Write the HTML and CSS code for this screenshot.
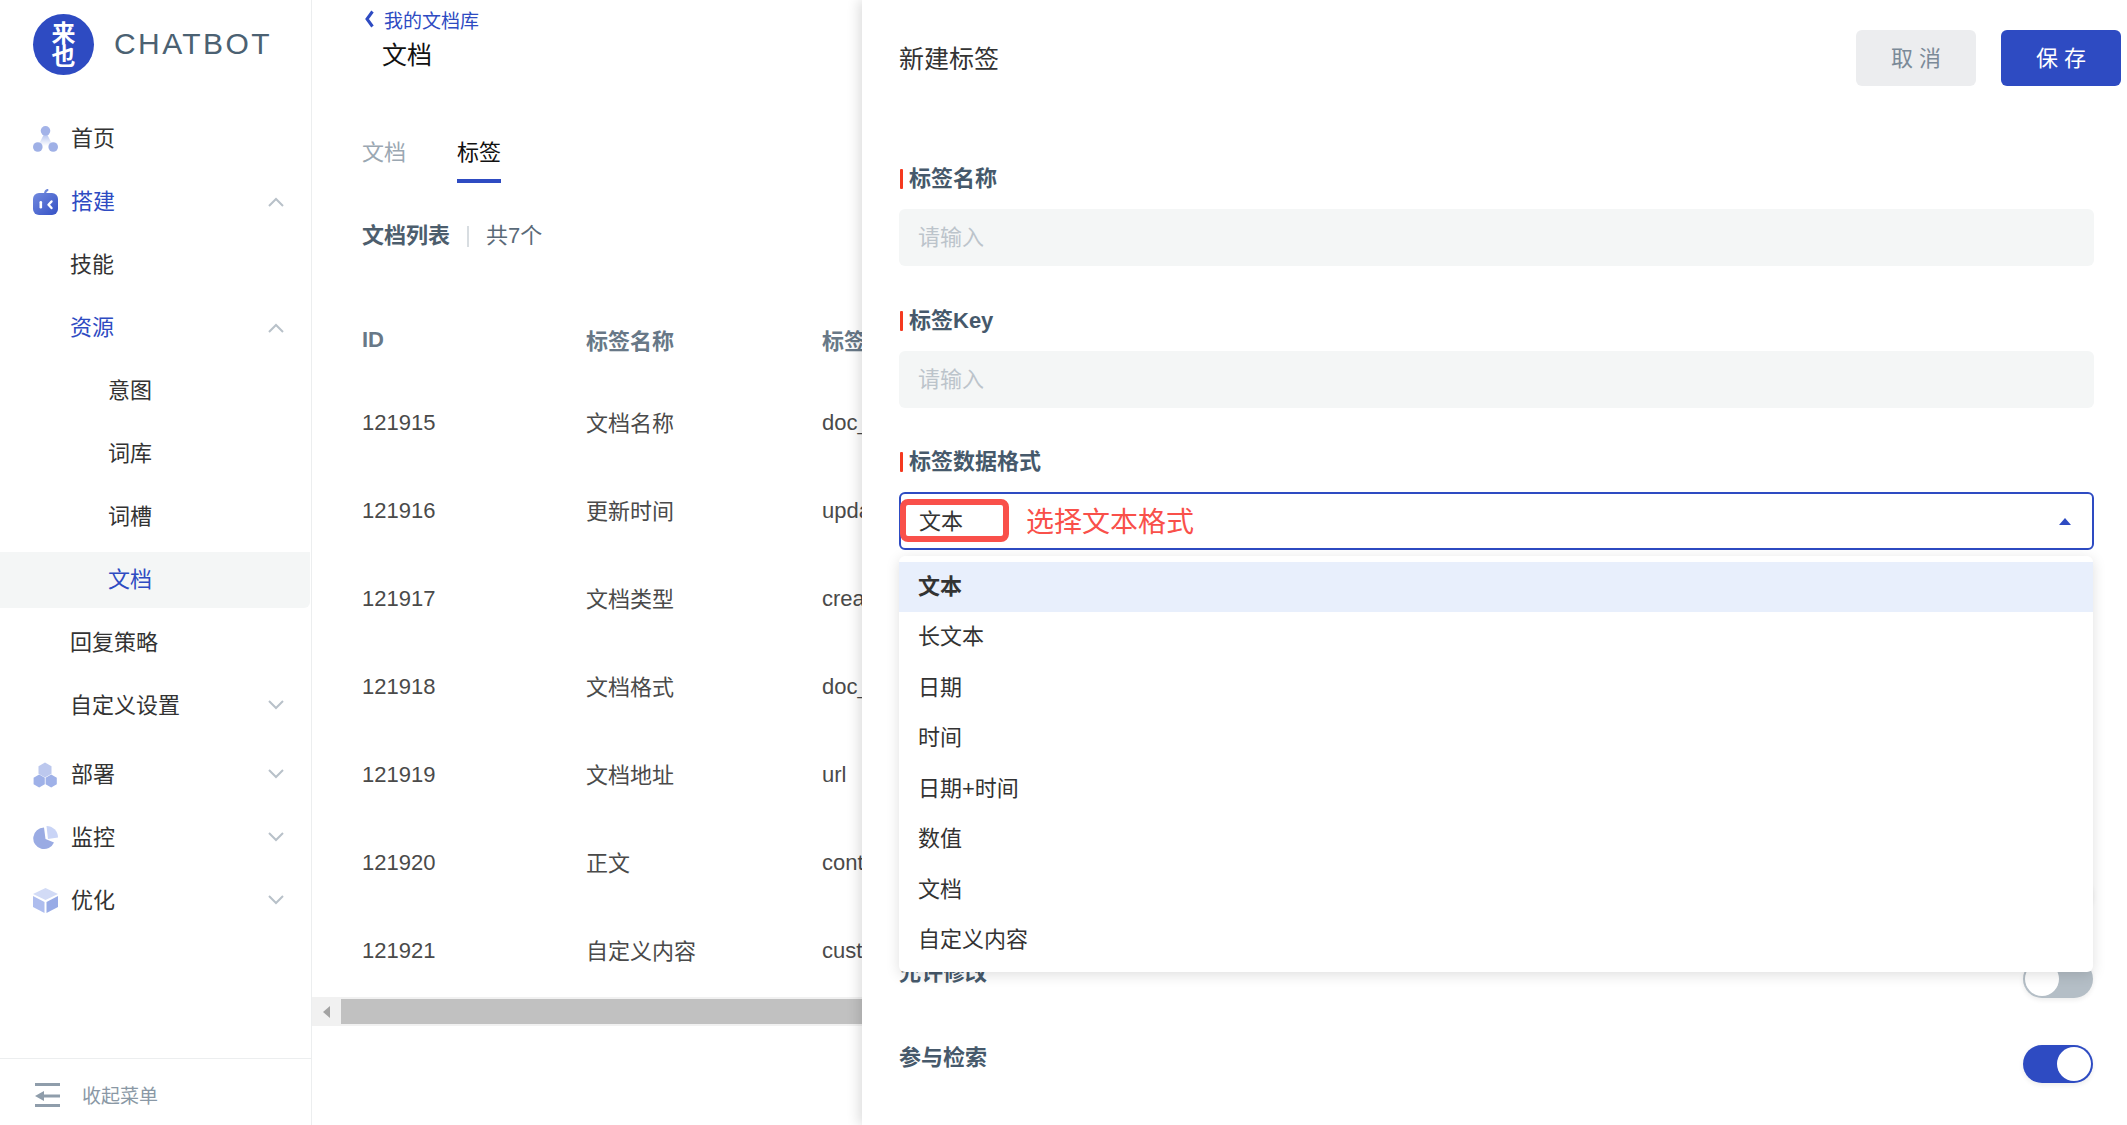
FILE: index.html
```html
<!DOCTYPE html>
<html lang="zh-CN">
<head>
  <meta charset="UTF-8">
  <title>CHATBOT</title>
  <link rel="stylesheet" href="styles.css">
</head>
<body>
  <aside class="sidebar">
    <div class="brand">
      <div class="brand-logo"><span>来</span><span>也</span></div>
      <div class="brand-name">CHATBOT</div>
    </div>

    <nav class="menu">
      <a class="menu-item">
        <svg class="menu-icon" viewBox="0 0 25 26">
          <defs>
            <linearGradient id="homeFade" x1="0" y1="0" x2="0" y2="1">
              <stop offset="0" stop-color="#9fb2ea"/>
              <stop offset="1" stop-color="#ffffff"/>
            </linearGradient>
          </defs>
          <polygon points="12.5,5 5,20 20,20" fill="url(#homeFade)"/>
          <circle cx="12.5" cy="4.8" r="4.8" fill="#a3b3e8"/>
          <circle cx="4.8" cy="21" r="4.8" fill="#9fb0e6"/>
          <circle cx="20.2" cy="21" r="4.8" fill="#9fb0e6"/>
        </svg>
        首页
      </a>
      <a class="menu-item is-open">
        <svg class="menu-icon" viewBox="0 0 25 26">
          <defs>
            <linearGradient id="botFill" x1="0" y1="0" x2="1" y2="1">
              <stop offset="0" stop-color="#7189de"/>
              <stop offset="1" stop-color="#3551c5"/>
            </linearGradient>
          </defs>
          <path d="M12 5 Q12 2 14.5 1" fill="none" stroke="#6d85da" stroke-width="2" stroke-linecap="round"/>
          <rect x="0" y="4" width="25" height="22" rx="6" fill="url(#botFill)"/>
          <rect x="6.5" y="12" width="2.6" height="7.5" rx="1.3" fill="#fff"/>
          <path d="M18.5 12.5 L15.5 15.8 L18.5 19" fill="none" stroke="#fff" stroke-width="2.4" stroke-linecap="round" stroke-linejoin="round"/>
        </svg>
        搭建
        <svg class="chevron" viewBox="0 0 16 10"><polyline points="1,9 8,2 15,9"/></svg>
      </a>
      <a class="menu-item menu-sub">技能</a>
      <a class="menu-item menu-sub is-open">
        资源
        <svg class="chevron" viewBox="0 0 16 10"><polyline points="1,9 8,2 15,9"/></svg>
      </a>
      <a class="menu-item menu-leaf">意图</a>
      <a class="menu-item menu-leaf">词库</a>
      <a class="menu-item menu-leaf">词槽</a>
      <a class="menu-item menu-leaf is-active">文档</a>
      <a class="menu-item menu-sub">回复策略</a>
      <a class="menu-item menu-sub menu-group-end">
        自定义设置
        <svg class="chevron is-down" viewBox="0 0 16 10"><polyline points="1,1 8,8 15,1"/></svg>
      </a>
      <a class="menu-item">
        <svg class="menu-icon" viewBox="0 0 25 26">
          <polygon points="12,0.5 18.5,4.25 18.5,11.75 12,15.5 5.5,11.75 5.5,4.25" fill="#bcc8ee"/>
          <polygon points="6.2,12.5 11.8,15.75 11.8,22.25 6.2,25.5 0.6,22.25 0.6,15.75" fill="#9fb1e8"/>
          <polygon points="18.2,12.5 23.8,15.75 23.8,22.25 18.2,25.5 12.6,22.25 12.6,15.75" fill="#9fb1e8"/>
        </svg>
        部署
        <svg class="chevron is-down" viewBox="0 0 16 10"><polyline points="1,1 8,8 15,1"/></svg>
      </a>
      <a class="menu-item">
        <svg class="menu-icon" viewBox="0 0 25 26">
          <path d="M11 2.5 A10.8 10.8 0 1 0 21 17.5 L12.5 14 Z" fill="#9aabe3"/>
          <path d="M13.5 1 A11.5 11.5 0 0 1 25 12.5 L15 14 Z" fill="#c9d4f6"/>
        </svg>
        监控
        <svg class="chevron is-down" viewBox="0 0 16 10"><polyline points="1,1 8,8 15,1"/></svg>
      </a>
      <a class="menu-item">
        <svg class="menu-icon" viewBox="0 0 25 26">
          <polygon points="12.5,0 25,6 12.5,12 0,6" fill="#d2dbf6"/>
          <polygon points="0,8 11.5,14 11.5,25 0,19" fill="#aebdee"/>
          <polygon points="25,8 13.5,14 13.5,25 25,19" fill="#98abe6"/>
        </svg>
        优化
        <svg class="chevron is-down" viewBox="0 0 16 10"><polyline points="1,1 8,8 15,1"/></svg>
      </a>
    </nav>

    <div class="collapse">
      <svg class="collapse-icon" viewBox="0 0 25 24">
        <rect x="0" y="0" width="25" height="3" fill="#8f9dab"/>
        <rect x="4" y="11.5" width="21" height="3" fill="#8f9dab"/>
        <polygon points="0,13 9,8 9,18" fill="#8f9dab"/>
        <rect x="0" y="21" width="25" height="3" fill="#8f9dab"/>
      </svg>
      收起菜单
    </div>
  </aside>

  <main class="main">
    <a class="back-link">
      <svg class="back-icon" viewBox="0 0 9 18"><polyline points="7.5,1.5 2,9 7.5,16.5"/></svg>
      我的文档库
    </a>
    <h1 class="page-title">文档</h1>

    <div class="tabs">
      <span class="tab">文档</span>
      <span class="tab is-active">标签</span>
    </div>

    <div class="summary">
      <b>文档列表</b>
      <i class="summary-line"></i>
      <span>共7个</span>
    </div>

    <table class="doc-table">
      <thead>
        <tr><th class="col-id">ID</th><th class="col-name">标签名称</th><th class="col-key">标签Key</th></tr>
      </thead>
      <tbody>
        <tr><td>121915</td><td class="col-name">文档名称</td><td>doc_name</td></tr>
        <tr><td>121916</td><td class="col-name">更新时间</td><td>update_time</td></tr>
        <tr><td>121917</td><td class="col-name">文档类型</td><td>create_time</td></tr>
        <tr><td>121918</td><td class="col-name">文档格式</td><td>doc_format</td></tr>
        <tr><td>121919</td><td class="col-name">文档地址</td><td>url</td></tr>
        <tr><td>121920</td><td class="col-name">正文</td><td>content</td></tr>
        <tr><td>121921</td><td class="col-name">自定义内容</td><td>custom</td></tr>
      </tbody>
    </table>

    <div class="h-scroll">
      <span class="h-scroll-arrow"><i></i></span>
      <span class="h-scroll-thumb"></span>
    </div>
  </main>

  <section class="drawer">
    <header class="drawer-head">
      <h2>新建标签</h2>
      <div class="drawer-actions">
        <button class="btn btn-cancel">取消</button>
        <button class="btn btn-save">保存</button>
      </div>
    </header>

    <form class="drawer-form">
      <label class="field-label">标签名称</label>
      <div class="input">请输入</div>

      <label class="field-label">标签Key</label>
      <div class="input">请输入</div>

      <label class="field-label">标签数据格式</label>
      <div class="select-wrap">
        <div class="select">
          <span class="select-value">文本</span>
          <span class="select-note">选择文本格式</span>
          <i class="select-caret"></i>
          <span class="select-mark"></span>
        </div>
        <ul class="dropdown">
          <li class="is-selected">文本</li>
          <li>长文本</li>
          <li>日期</li>
          <li>时间</li>
          <li>日期+时间</li>
          <li>数值</li>
          <li>文档</li>
          <li>自定义内容</li>
        </ul>
      </div>

      <div class="switches">
        <div class="switch-row">
          <span class="switch-label"></span>
          <span class="toggle is-on"><i></i></span>
        </div>
        <div class="switch-row">
          <span class="switch-label">允许修改</span>
          <span class="toggle"><i></i></span>
        </div>
        <div class="switch-row">
          <span class="switch-label">参与检索</span>
          <span class="toggle is-on"><i></i></span>
        </div>
      </div>
    </form>
  </section>
</body>
</html>
```

FILE: styles.css
```css
* {
  box-sizing: border-box;
}

body {
  font-family: "Liberation Sans", "Noto Sans CJK SC", sans-serif;
  font-size: 22px;
  color: #333;
  background: #fff;
  display: flex;
  height: 100vh;
  margin: 0;
  overflow: hidden;
  position: relative;
}

/* sidebar */
.sidebar {
  width: 312px;
  flex-shrink: 0;
  border-right: 1px solid #eceeef;
  display: flex;
  flex-direction: column;
}

.brand {
  height: 111px;
  padding: 14px 0 0 33px;
  display: flex;
  align-items: flex-start;
}

.brand-logo {
  width: 61px;
  height: 61px;
  border-radius: 50%;
  background: #2e4bc2;
  color: #fff;
  font-size: 24px;
  font-weight: 700;
  line-height: 23px;
  display: flex;
  flex-direction: column;
  align-items: center;
  justify-content: center;
}

.brand-name {
  margin-left: 20px;
  font-size: 30px;
  line-height: 60px;
  letter-spacing: 2.4px;
  color: #4b6172;
}

.menu-item {
  height: 56px;
  margin-bottom: 7px;
  padding: 0 27px 0 33px;
  display: flex;
  align-items: center;
  line-height: 56px;
}

.menu-icon {
  width: 25px;
  height: 26px;
  margin-right: 13px;
  flex-shrink: 0;
}

.menu-sub {
  padding-left: 70px;
}

.menu-leaf {
  padding-left: 108px;
}

.menu-group-end {
  margin-bottom: 13px;
}

.menu-item.is-open {
  color: #2e4bc2;
}

.menu-item.is-active {
  color: #2e4bc2;
  background: #f4f6f6;
  border-radius: 0 0 6px 0;
  margin-right: 1px;
}

.chevron {
  width: 16px;
  height: 10px;
  margin-left: auto;
  fill: none;
  stroke: #b8c1c9;
  stroke-width: 2;
}

.chevron.is-down {
  margin-bottom: 3px;
}

.collapse {
  margin-top: auto;
  height: 67px;
  border-top: 1px solid #eceeef;
  padding: 5px 0 0 35px;
  display: flex;
  align-items: center;
  font-size: 19px;
  color: #8a98a5;
}

.collapse-icon {
  width: 25px;
  height: 24px;
  margin-right: 22px;
}

/* main column, most of it sits under the drawer */
.main {
  flex: 1;
  min-width: 0;
  padding-top: 7px;
  overflow: hidden;
}

.back-link {
  margin-left: 53px;
  height: 24px;
  display: flex;
  align-items: center;
  font-size: 19px;
  color: #2e4bc2;
}

.back-icon {
  width: 9px;
  height: 18px;
  margin-right: 10px;
  fill: none;
  stroke: #2e4bc2;
  stroke-width: 3;
}

.page-title {
  margin: 6px 0 0 70px;
  font-size: 25px;
  font-weight: 400;
  line-height: 36px;
  color: #111;
}

.tabs {
  margin: 58px 0 0 50px;
  display: flex;
  gap: 51px;
}

.tab {
  line-height: 44px;
  padding-bottom: 4px;
  border-bottom: 4px solid transparent;
  color: #9aa7b2;
}

.tab.is-active {
  color: #111;
  border-bottom-color: #2e4bc2;
}

.summary {
  margin: 38px 0 0 50px;
  line-height: 30px;
  display: flex;
  align-items: center;
  color: #5a6a78;
}

.summary b {
  color: #4d5e6d;
}

.summary-line {
  width: 2px;
  height: 21px;
  margin: 0 17px;
  background: #d8dde1;
}

.doc-table {
  margin: 55px 0 0 50px;
  width: 1000px;
  table-layout: fixed;
  border-collapse: collapse;
  color: #4a4a4a;
}

.doc-table th {
  height: 73px;
  padding: 0 0 5px;
  text-align: left;
  font-weight: 700;
  color: #687887;
}

.doc-table th.col-name,
.doc-table th.col-key {
  padding-bottom: 8px;
}

.doc-table td {
  height: 88px;
  padding: 0;
  white-space: nowrap;
}

/* the CJK glyphs sit low against the latin cells */
.doc-table td.col-name {
  padding-bottom: 4px;
}

.col-id {
  width: 224px;
}

.col-name {
  width: 236px;
}

.h-scroll {
  margin-top: 2px;
  height: 29px;
  padding: 2px 0;
  background: #f1f1f1;
  display: flex;
}

.h-scroll-arrow {
  width: 29px;
  display: flex;
  align-items: center;
  justify-content: center;
}

.h-scroll-arrow i {
  border-style: solid;
  border-width: 6px 7px 6px 0;
  border-color: transparent #a3a3a3 transparent transparent;
}

.h-scroll-thumb {
  flex: 1;
  background: #c1c1c1;
}

/* right drawer over the page */
.drawer {
  position: absolute;
  top: 0;
  right: 0;
  bottom: 0;
  width: 1265px;
  padding-left: 37px;
  background: #fff;
  box-shadow: -3px 0 12px rgba(0, 0, 0, 0.14);
}

.drawer-head {
  padding: 30px 6px 0 0;
  display: flex;
  justify-content: space-between;
}

.drawer-head h2 {
  margin: 1px 0 0;
  font-size: 25px;
  font-weight: 400;
  line-height: 56px;
}

.drawer-actions {
  display: flex;
  gap: 25px;
}

.btn {
  width: 120px;
  height: 56px;
  padding: 0 0 5px;
  border: none;
  border-radius: 6px;
  font-family: inherit;
  font-size: 22px;
  letter-spacing: 6px;
  text-indent: 6px;
}

.btn-cancel {
  background: #ecedef;
  color: #7b8a98;
}

.btn-save {
  background: #2e4bc2;
  color: #fff;
}

.drawer-form {
  padding: 77px 33px 0 0;
}

.field-label {
  display: block;
  height: 30px;
  margin-bottom: 15px;
  padding-left: 10px;
  line-height: 30px;
  font-weight: 700;
  color: #46596b;
  position: relative;
}

.field-label::before {
  content: "";
  position: absolute;
  left: 1px;
  top: 5px;
  width: 3px;
  height: 20px;
  border-radius: 1px;
  background: #f5391f;
}

.input {
  height: 57px;
  margin-bottom: 39.5px;
  padding-left: 19px;
  border-radius: 6px;
  background: #f4f6f6;
  color: #bcc4cb;
  line-height: 57px;
}

.select-wrap {
  position: relative;
}

.select {
  height: 58px;
  padding: 0 21px 0 18px;
  border: 2px solid #2e4bc2;
  border-radius: 6px;
  display: flex;
  align-items: center;
  position: relative;
}

.select-value {
  width: 107px;
  margin-bottom: 5px;
}

.select-note {
  margin-bottom: 2px;
  font-size: 28px;
  color: #f9504a;
}

.select-caret {
  margin-left: auto;
  border-style: solid;
  border-width: 0 6px 7px;
  border-color: transparent transparent #2e4bc2;
}

.select-mark {
  position: absolute;
  left: -1px;
  top: 5px;
  width: 109px;
  height: 43px;
  border: 6px solid #f9504a;
  border-radius: 8px;
}

.dropdown {
  position: absolute;
  z-index: 2;
  top: 64px;
  left: 0;
  right: 1px;
  margin: 0;
  padding: 6px 0;
  list-style: none;
  background: #fff;
  border-radius: 6px;
  box-shadow: 0 3px 14px rgba(0, 0, 0, 0.13);
}

.dropdown li {
  height: 50.45px;
  padding-left: 19px;
  line-height: 50px;
}

.dropdown li.is-selected {
  background: #e8effc;
  font-weight: 700;
}

.switches {
  margin-top: 322px;
}

.switch-row {
  height: 85px;
  padding-right: 1px;
  display: flex;
  justify-content: space-between;
  align-items: flex-start;
}

.switch-label {
  margin-top: 1px;
  line-height: 30px;
  font-weight: 700;
  color: #46596b;
}

.toggle {
  width: 70px;
  height: 38px;
  margin-top: 3px;
  padding: 2px;
  border-radius: 19px;
  background: #b4bec6;
  box-shadow: 0 2px 5px rgba(0, 0, 0, 0.08);
  display: flex;
}

.toggle.is-on {
  background: #2e4bc2;
  justify-content: flex-end;
}

.toggle i {
  width: 34px;
  height: 34px;
  border-radius: 50%;
  background: #fff;
}
```
